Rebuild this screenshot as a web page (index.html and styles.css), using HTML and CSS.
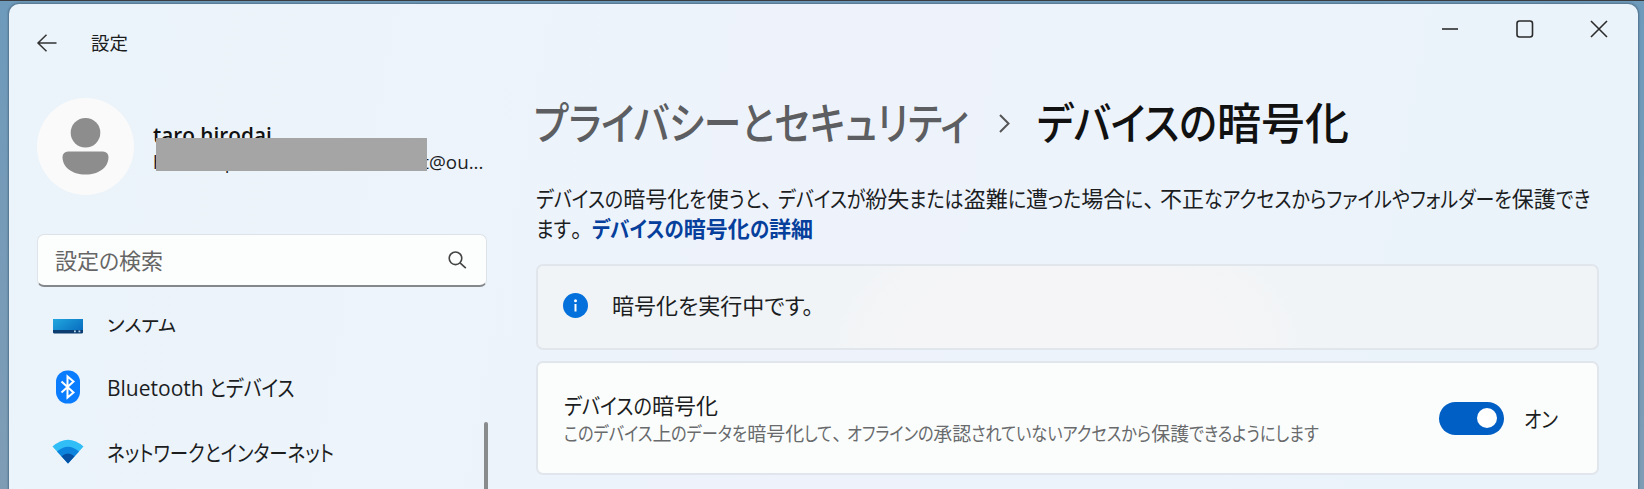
FILE: index.html
```html
<!DOCTYPE html>
<html lang="ja">
<head>
<meta charset="utf-8">
<title>設定</title>
<link rel="stylesheet" href="styles.css">
</head>
<body>
<div class="window">
  <aside class="sidebar">
    <div class="titlebar">
      <svg class="back" viewBox="0 0 20 18"><path d="M19.5 9H1M9.500 .8 1 9l8.500 8.200"/></svg>
      <span class="app-name">設定</span>
    </div>
    <div class="account">
      <svg class="avatar" viewBox="0 0 97 97"><circle cx="48.500" cy="48.500" r="48.500" fill="#fafafa"/><circle cx="48.500" cy="34.700" r="14.800" fill="#8d8d8d"/><path d="M31 53.500h35a5.500 5.500 0 0 1 5.500 5.500c0 10-9 17.500-23 17.500S25.500 69 25.500 59a5.500 5.500 0 0 1 5.500-5.500z" fill="#8d8d8d"/></svg>
      <div class="identity">
        <div class="user-name">taro hirodai</div>
        <div class="email"><span class="email-local"><span>h</span><span>p</span><span>t</span></span><span>@ou...</span></div>
        <div class="redaction"></div>
      </div>
    </div>
    <div class="search">
      <span class="placeholder" data-width="108">設定の検索</span>
      <svg class="glass" viewBox="0 0 19 18"><circle cx="7.500" cy="7.300" r="6.300"/><path d="m12 11.800 5.800 5.400"/></svg>
    </div>
    <nav class="nav">
      <div class="items">
        <a class="item"><svg class="nav-icon" viewBox="0 0 32 34"><defs><linearGradient id="screen" x1="0" y1="0" x2="1" y2="1"><stop offset="0" stop-color="#27b5e6"/><stop offset="1" stop-color="#0668bd"/></linearGradient></defs><rect x="1" y="6" width="30" height="22" rx="1.500" fill="url(#screen)"/><path d="M1 25h30v2a1.500 1.500 0 0 1-1.500 1.500h-27A1.500 1.500 0 0 1 1 27z" fill="#0b3d70"/><path d="M22 25.500h1.800v1.800H22zM26.500 25.500h1.800v1.800h-1.800z" fill="#b5d8ee"/></svg><span data-width="69">システム</span></a>
        <a class="item lower"><svg class="nav-icon" viewBox="0 0 32 34"><rect x="4" y=".5" width="24" height="33" rx="11.500" fill="#0a7cff"/><path d="m9.500 11.500 12 11-6 5V6.500l6 5-12 11" fill="none" stroke="#fff" stroke-width="2"/></svg><span data-width="188"><span class="latin">Bluetooth</span> とデバイス</span></a>
        <a class="item"><svg class="nav-icon" viewBox="0 0 32 34"><path d="M.5 11.500Q16-2 31.500 11.500L16 28.500z" fill="#31bdf5"/><path d="M5 16.500q11-9.500 22 0l-11 12z" fill="#0c83dd"/><path d="M9.500 21.300q6.500-5.500 13 0L16 28.500z" fill="#0650a4"/></svg><span data-width="227">ネットワークとインターネット</span></a>
      </div>
      <div class="scrollbar"></div>
    </nav>
  </aside>
  <main class="main">
    <div class="controls">
      <svg class="control" viewBox="0 0 18 18"><path d="M1 9h16"/></svg>
      <svg class="control" viewBox="0 0 18 18"><rect x="1" y="1" width="15.500" height="16" rx="2.500"/></svg>
      <svg class="control" viewBox="0 0 18 18"><path d="m1 1 16 16M17 1 1 17"/></svg>
    </div>
    <h1 class="breadcrumb">
      <span class="parent" data-width="435">プライバシーとセキュリティ</span>
      <svg class="chevron" viewBox="0 0 11 19"><path d="m1 1 8.500 8.500L1 18"/></svg>
      <span class="current" data-width="312">デバイスの暗号化</span>
    </h1>
    <p class="intro"><span data-width="1054">デバイスの暗号化を使うと、デバイスが紛失または盗難に遭った場合に、不正なアクセスからファイルやフォルダーを保護でき</span><br><span data-width="46">ます。</span><a class="more" data-width="221">デバイスの暗号化の詳細</a></p>
    <section class="card notice">
      <svg class="info" viewBox="0 0 25 25"><circle cx="12.500" cy="12.500" r="12.500" fill="#0470dc"/><circle cx="12.500" cy="7.700" r="1.500" fill="#fff"/><path d="M12.500 11v7.500" stroke="#fff" stroke-width="2"/></svg>
      <span class="status">暗号化を実行中です。</span>
    </section>
    <section class="card setting">
      <div class="labels">
        <div class="name"><span data-width="154">デバイスの暗号化</span></div>
        <div class="detail"><span data-width="755">このデバイス上のデータを暗号化して、オフラインの承認されていないアクセスから保護できるようにします</span></div>
      </div>
      <div class="toggle"><div class="knob"></div></div>
      <span class="on" data-width="34">オン</span>
    </section>
  </main>
</div>
<script src="kana.js"></script>
</body>
</html>
```
FILE: kana.js
```js
// Condenses the kana of a label so that the whole label takes its data-width,
// while its kanji keep their full width and a comma keeps some space after it.
function wrap(className, text) {
  const span = document.createElement('span');
  span.className = className;
  span.textContent = text;
  return span;
}

for (const label of document.querySelectorAll('[data-width]')) {
  const runs = [];
  for (const node of [...label.childNodes]) {
    if (node.nodeType !== Node.TEXT_NODE) continue;
    const parts = node.data.split(/([\u3041-\u30ff]+|、)/).filter(Boolean);
    node.replaceWith(...parts.map((part) => {
      if (part === '、') return wrap('comma', part);
      if (!/[\u3041-\u30ff]/.test(part)) return part;
      const run = wrap('kana', part);
      runs.push(run);
      return run;
    }));
  }
  const total = label.getBoundingClientRect().width;
  const widths = runs.map((run) => run.getBoundingClientRect().width);
  const kana = widths.reduce((a, b) => a + b, 0);
  const scale = (label.dataset.width - (total - kana)) / kana;
  runs.forEach((run, i) => {
    run.style.width = widths[i] * scale + 'px';
    run.style.transform = `scaleX(${scale})`;
  });
}
```
FILE: styles.css
```css
* { box-sizing: border-box; }
body {
  margin: 0;
  height: 489px;
  overflow: hidden;
  padding: 3px 6px 0 9px;
  border-top: 1px solid #3b3c40;
  background: linear-gradient(#6e9abb, #7f9cb5);
  font-family: "Open Sans", "Noto Sans CJK JP", sans-serif;
  font-feature-settings: "palt";
  font-size: 22px;
  line-height: 30px;
  color: #1b1d1f;
  white-space: nowrap;
}
svg { display: block; flex: none; overflow: visible; }
.kana { display: inline-block; transform-origin: 0 50%; }
.comma { padding-right: .25em; }
.window {
  display: flex;
  height: 500px;
  border-radius: 10px 10px 0 0;
  background: linear-gradient(100deg, #ebf4fa, #eef3fb 50%, #eaf3fa);
  box-shadow: 0 0 2px 1px #52718a;
}
.sidebar { width: 482px; flex: none; padding-left: 28px; }
.titlebar { display: flex; align-items: center; gap: 34px; padding-top: 24px; height: 53px; }
.back { width: 20px; height: 18px; fill: none; stroke: #333; stroke-width: 1.5; }
.app-name { font-size: 18.500px; }
.account { display: flex; gap: 19px; margin-top: 41px; height: 97px; }
.avatar { width: 97px; height: 97px; }
.identity { position: relative; padding-top: 24px; }
.user-name { font-size: 20.800px; font-weight: 600; line-height: 26px; color: #111; }
.email { display: flex; padding-top: 1px; font-size: 18.800px; line-height: 26px; }
.email-local { display: flex; justify-content: space-between; width: 276px; }
.email-local span:nth-child(2) { margin-right: 126px; }
.redaction { position: absolute; left: 3px; top: 40px; width: 271px; height: 33px; background: #a5a5a5; }
.search {
  display: flex; align-items: center; justify-content: space-between;
  width: 450px; height: 53px; margin-top: 39px; padding: 0 19px 0 17px;
  border: 1px solid #dde3e8; border-bottom: 2px solid #85888b; border-radius: 7px;
  background: #fcfdfd; color: #666;
}
.glass { width: 19px; height: 18px; fill: none; stroke: #444; stroke-width: 1.6; }
.nav { display: flex; justify-content: space-between; width: 451px; height: 171px; margin-top: 32px; overflow: hidden; }
.items { margin-top: -30px; }
.item { display: flex; align-items: center; gap: 23px; height: 65px; padding-left: 15px; }
.lower { padding-top: 1px; }
.nav-icon { width: 32px; height: 34px; }
.latin { font-size: 21px; }
.scrollbar { width: 4px; margin-top: 103px; border-radius: 2px 2px 0 0; background: #898b8d; }
.main { width: 1147px; flex: none; padding-left: 45px; }
.controls { display: flex; justify-content: flex-end; gap: 56.500px; height: 75px; padding: 16px 30px 0 0; }
.control { width: 18px; height: 18px; fill: none; stroke: #2b2b2b; stroke-width: 1.6; }
.breadcrumb { display: flex; align-items: center; margin: 0 0 0 -2px; height: 88px; font-size: 44px; font-weight: 500; line-height: 60px; }
.parent { color: #5c5e61; }
.chevron { width: 11px; height: 19px; margin: 0 27px 0 30px; fill: none; stroke: #555; stroke-width: 2; }
.current { color: #111; }
.intro { margin: 16px 0 0; height: 81px; line-height: 30px; }
.more { margin-left: 10px; font-weight: 700; color: #063f9c; }
.card { display: flex; align-items: center; width: 1063px; border: 2px solid #e1e6ec; border-radius: 7px; }
.notice { height: 86px; padding: 0 0 4px 25px; gap: 24px; background: radial-gradient(ellipse 260px 150px at 50% 100%, #f5f5f7 60%, #f0f4f6); }
.info { width: 25px; height: 25px; }
.setting { height: 114px; margin-top: 11px; padding: 0 39px 0 26px; background: #fbfdfc; }
.labels { flex: 1; }
.name { line-height: 27px; padding-top: 5px; }
.detail { font-size: 19px; color: #686a6c; }
.toggle { width: 65px; height: 33px; padding: 6px 7px; border-radius: 17px; background: #005fc4; }
.knob { width: 20px; height: 20px; margin-left: auto; border-radius: 50%; background: #fff; }
.on { margin-left: 20px; }
```
